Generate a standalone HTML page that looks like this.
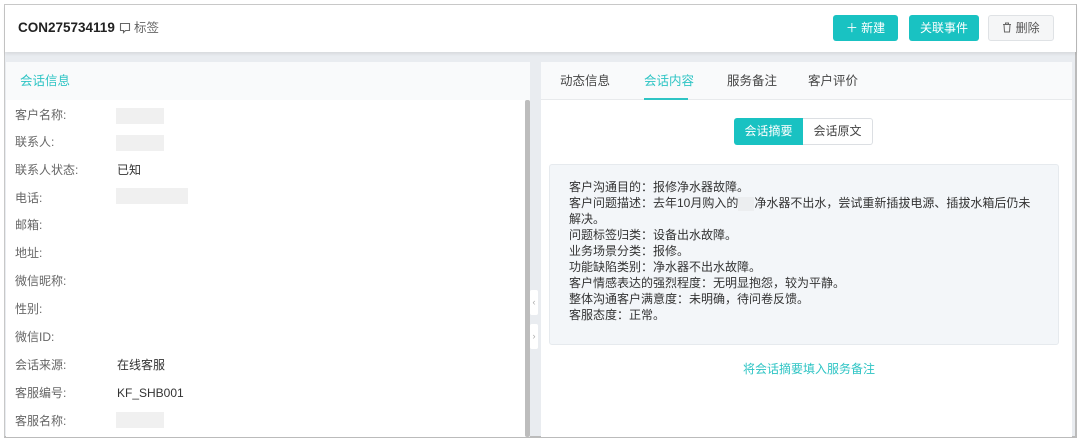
<!DOCTYPE html><html><head><meta charset="utf-8"><style>
*{margin:0;padding:0;box-sizing:border-box}
body{width:1080px;height:442px;background:#fff;font-family:"Liberation Sans","Noto Sans CJK SC",sans-serif;font-size:12px;color:#333;position:relative;overflow:hidden}
.a{position:absolute;line-height:16px}
.frame{left:4px;top:4px;width:1073px;height:434px;border:1px solid #c8c8c8;background:#e9ecf0;border-right:2px solid #bbb;border-bottom:2px solid #bbb}
.btn{top:15px;height:26px;border-radius:3px;color:#fff;background:#19c2c2;font-size:12px;text-align:center;line-height:26px}
.lbl{left:15px;color:#666;font-size:12px}
.val{left:117px;font-size:12px;color:#333}
.blank{left:116px;width:48px;height:16px;background:#f0f0f0}
.tab{top:73px;font-size:12.5px;color:#444}
.sum div{line-height:16px;font-size:12px;color:#333}
</style></head><body>
<div class="a frame"></div>
<div class="a" style="left:5px;top:5px;width:1071px;height:47px;background:#fff;box-shadow:0 2px 3px rgba(0,0,0,.08)"></div>
<div class="a" style="left:18px;top:20px;font-size:13.5px;font-weight:bold;color:#222">CON275734119</div>
<svg class="a" style="left:119px;top:22px" width="12" height="12" viewBox="0 0 12 12"><path d="M1.5 1.5h9v7h-4l-2 2v-2h-3z" fill="none" stroke="#666" stroke-width="1.1"/></svg>
<div class="a" style="left:134px;top:20px;font-size:12.5px;color:#666">标签</div>
<div class="a btn" style="left:833px;width:65px;line-height:26px">＋ 新建</div>
<div class="a btn" style="left:909px;width:70px;line-height:26px">关联事件</div>
<div class="a btn" style="left:988px;width:66px;background:#f5f6f7;border:1px solid #dfe2e5;color:#555;line-height:24px"><svg width="10" height="11" viewBox="0 0 10 11" style="vertical-align:-1px"><path d="M1 2.5h8M3.5 2.5V1h3v1.5M2 2.5l.5 7.5h5l.5-7.5" fill="none" stroke="#666" stroke-width="1"/></svg> 删除</div>
<!-- left panel -->
<div class="a" style="left:6px;top:62px;width:524px;height:375px;background:#fff"></div>
<div class="a" style="left:6px;top:62px;width:524px;height:38px;background:#f9fafb"></div>
<div class="a" style="left:20px;top:73px;color:#2ec4c4;font-size:12.5px">会话信息</div>
<div class="a" style="left:525px;top:100px;width:5px;height:337px;background:#bdbdbd;border-radius:2px"></div>
<div class="a lbl" style="top:107px">客户名称:</div><div class="a blank" style="top:108px"></div>
<div class="a lbl" style="top:134px">联系人:</div><div class="a blank" style="top:135px"></div>
<div class="a lbl" style="top:162px">联系人状态:</div><div class="a val" style="top:162px">已知</div>
<div class="a lbl" style="top:190px">电话:</div><div class="a blank" style="top:188px;width:72px"></div>
<div class="a lbl" style="top:217px">邮箱:</div>
<div class="a lbl" style="top:245px">地址:</div>
<div class="a lbl" style="top:273px">微信昵称:</div>
<div class="a lbl" style="top:301px">性别:</div>
<div class="a lbl" style="top:329px">微信ID:</div>
<div class="a lbl" style="top:357px">会话来源:</div><div class="a val" style="top:357px">在线客服</div>
<div class="a lbl" style="top:385px">客服编号:</div><div class="a val" style="top:385px">KF_SHB001</div>
<div class="a lbl" style="top:413px">客服名称:</div><div class="a blank" style="top:412px"></div>
<div class="a" style="left:530px;top:290px;width:8px;height:25px;background:#fff;border-radius:2px;color:#aaa;font-size:9px;line-height:25px;text-align:center">‹</div>
<div class="a" style="left:530px;top:324px;width:8px;height:25px;background:#fff;border-radius:2px;color:#aaa;font-size:9px;line-height:25px;text-align:center">›</div>
<!-- right panel -->
<div class="a" style="left:541px;top:62px;width:531px;height:375px;background:#fff"></div>
<div class="a" style="left:541px;top:62px;width:531px;height:38px;background:#f9fafb;border-bottom:1px solid #e8eaec"></div>
<div class="a tab" style="left:560px">动态信息</div>
<div class="a tab" style="left:644px;color:#2ec4c4">会话内容</div>
<div class="a" style="left:644px;top:98px;width:44px;height:2px;background:#2ec4c4"></div>
<div class="a tab" style="left:727px">服务备注</div>
<div class="a tab" style="left:808px">客户评价</div>
<div class="a" style="left:734px;top:118px;width:69px;height:27px;background:#19c2c2;color:#fff;border-radius:3px 0 0 3px;text-align:center;line-height:27px">会话摘要</div>
<div class="a" style="left:803px;top:118px;width:70px;height:27px;border:1px solid #dcdfe3;border-left:none;border-radius:0 3px 3px 0;text-align:center;line-height:25px;color:#444">会话原文</div>
<div class="a sum" style="left:549px;top:164px;width:510px;height:181px;background:#f3f6f9;border:1px solid #e6eaee;border-radius:3px;padding:14px 24px 14px 19px">
<div>客户沟通目的：报修净水器故障。</div>
<div>客户问题描述：去年10月购入的<span style="display:inline-block;width:16px;height:14px;background:#eceef0;vertical-align:middle"></span>净水器不出水，尝试重新插拔电源、插拔水箱后仍未解决。</div>
<div>问题标签归类：设备出水故障。</div>
<div>业务场景分类：报修。</div>
<div>功能缺陷类别：净水器不出水故障。</div>
<div>客户情感表达的强烈程度：无明显抱怨，较为平静。</div>
<div>整体沟通客户满意度：未明确，待问卷反馈。</div>
<div>客服态度：正常。</div>
</div>
<div class="a" style="left:549px;top:361px;width:520px;text-align:center;color:#2ec4c4;font-size:12px">将会话摘要填入服务备注</div>
</body></html>
